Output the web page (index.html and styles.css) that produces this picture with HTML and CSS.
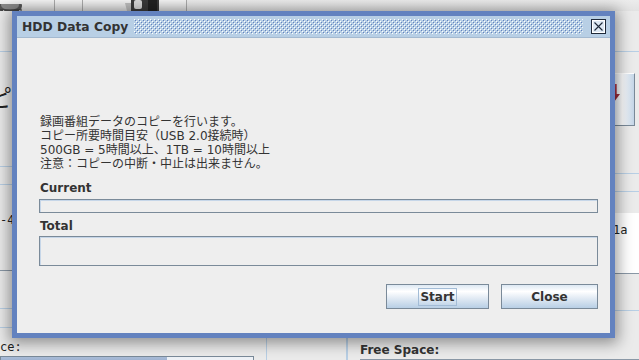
FILE: index.html
```html
<!DOCTYPE html>
<html lang="ja">
<head>
<meta charset="utf-8">
<title>HDD Data Copy</title>
<link rel="stylesheet" href="styles.css">
</head>
<body>
<div class="app">
  <div class="toolbar">
    <div class="tool tool-a">
      <svg width="24" height="11" viewBox="0 0 24 11"><ellipse cx="10" cy="2" rx="12" ry="8" fill="#555"/><ellipse cx="10" cy="1" rx="9" ry="5" fill="#888"/><path d="M0 6h22M0 8h22" stroke="#333" stroke-width="1"/><path d="M2 9l2-3M6 10l2-3M10 10l2-3M14 10l2-3M18 9l2-3" stroke="#ccc" stroke-width="1"/></svg>
    </div>
    <div class="tool tool-b"></div>
    <div class="tool tool-c">
      <svg width="40" height="11" viewBox="0 0 40 11"><path d="M6 0h28v11H6z" fill="#3a3a3a"/><rect x="9" y="0" width="8" height="9" rx="2" fill="#d8d8d8"/><rect x="23" y="0" width="9" height="11" fill="#222"/><path d="M0 3l6 0v8H2z" fill="#bdbdbd"/></svg>
    </div>
    <div class="tool tool-d"></div>
  </div>
  <div class="main">
    <div class="pane left">
      <div class="row r1"></div>
      <div class="row r2"><span class="big">ピ</span></div>
      <div class="row r3"></div>
      <div class="row r4"><span class="mono">-4</span></div>
      <div class="row r5"></div>
      <div class="row r6"></div>
      <div class="row r7">
        <span class="lbl">ce:</span>
        <div class="meter"><div class="meter-fill" style="width:66%"></div></div>
      </div>
    </div>
    <div class="pane mid"></div>
    <div class="pane right">
      <div class="row r1"></div>
      <div class="row q2"><div class="side-btn"><span class="arrow"></span></div></div>
      <div class="row q3"></div>
      <div class="row q4"><div class="textarea"><span class="mono">1a</span></div></div>
      <div class="row q5"></div>
      <div class="row q6"><span class="lbl bold">Free Space:</span><div class="underline"></div></div>
    </div>
  </div>
</div>

<div class="dialog" role="dialog" aria-label="HDD Data Copy">
  <div class="titlebar">
    <span class="title">HDD Data Copy</span>
    <svg class="bumps" height="15" aria-hidden="true">
      <defs>
        <pattern id="bp" width="4" height="4" patternUnits="userSpaceOnUse">
          <rect x="0" y="0" width="1" height="1" fill="#ffffff"/>
          <rect x="2" y="2" width="1" height="1" fill="#ffffff"/>
          <rect x="1" y="1" width="1" height="1" fill="#6382bf"/>
          <rect x="3" y="3" width="1" height="1" fill="#6382bf"/>
        </pattern>
      </defs>
      <rect width="100%" height="100%" fill="url(#bp)"/>
    </svg>
    <svg class="close" width="15" height="15" viewBox="0 0 15 15" aria-label="close">
      <rect x="0.5" y="0.5" width="14" height="14" fill="#dde8f3" stroke="#1f2a3a"/>
      <rect x="1.5" y="1.5" width="12" height="12" fill="none" stroke="#ffffff"/>
      <path d="M3.5 3.5L11.5 11.5M11.5 3.5L3.5 11.5" stroke="#1f2a3a" stroke-width="1.1"/>
    </svg>
  </div>
  <div class="body">
    <div class="msg">
      <div>録画番組データのコピーを行います。</div>
      <div>コピー所要時間目安（USB 2.0接続時）</div>
      <div>500GB = 5時間以上、1TB = 10時間以上</div>
      <div>注意：コピーの中断・中止は出来ません。</div>
    </div>
    <div class="label first">Current</div>
    <div class="bar"></div>
    <div class="label">Total</div>
    <div class="bar tall"></div>
    <div class="buttons">
      <button class="btn start"><span class="focus">Start</span></button>
      <button class="btn close-btn"><span>Close</span></button>
    </div>
  </div>
</div>
</body>
</html>
```
FILE: styles.css
```css
html, body {
  margin: 0;
  padding: 0;
}
body {
  width: 639px;
  height: 360px;
  overflow: hidden;
  background: #eeeeee;
  font-family: "DejaVu Sans", "Noto Sans CJK JP", sans-serif;
  color: #333333;
  position: relative;
}

/* ---------- background application ---------- */
.app {
  display: flex;
  flex-direction: column;
  height: 360px;
}
.toolbar {
  height: 11px;
  display: flex;
  background: linear-gradient(#f4f4f4, #dedede);
  flex: none;
}
.tool {
  height: 11px;
  border-right: 1px solid #a9a9a9;
  overflow: hidden;
}
.tool-a { width: 54px; }
.tool-b { width: 27px; }
.tool-c { width: 103px; display: flex; justify-content: center; }
.tool-c svg { margin-left: 20px; }
.tool-d { flex: 1; border-right: none; background: linear-gradient(#ececec, #e2e2e2); }

.main {
  flex: 1;
  display: flex;
  min-height: 0;
}
.pane {
  display: flex;
  flex-direction: column;
  background: #ebebeb;
}
.left {
  width: 266px;
  border-right: 1px solid #b8cfe5;
}
.mid {
  width: 79px;
  border-right: 1px solid #b8cfe5;
}
.right {
  flex: 1;
}
.row {
  flex: none;
  box-sizing: border-box;
  border-bottom: 1px solid #b8cfe5;
  position: relative;
  overflow: hidden;
}
.left .r1 { height: 41px; }
.left .r2 { height: 115px; }
.left .r3 { height: 18px; }
.left .r4 { height: 86px; border-bottom-color: #8a98a6; }
.left .r5 { height: 38px; }
.left .r6 { height: 19px; }
.left .r7 { flex: 1; border-bottom: none; padding-top: 12px; }

.big {
  display: block;
  margin-top: 33px;
  margin-left: -12px;
  font-size: 24px;
  line-height: 24px;
  font-family: "Noto Sans CJK JP", sans-serif;
  color: #222;
}
.mono {
  font-family: "DejaVu Sans Mono", "Liberation Mono", monospace;
  font-size: 12px;
  color: #222;
}
.left .r4 .mono {
  display: block;
  margin-top: 28px;
}
.lbl {
  display: block;
  font-size: 12px;
  line-height: 14px;
  color: #222;
  font-family: "DejaVu Sans Mono", monospace;
}
.lbl.bold {
  font-family: "DejaVu Sans", sans-serif;
  font-weight: bold;
  color: #333;
}
.meter {
  margin-top: 2px;
  width: 252px;
  height: 10px;
  border: 1px solid #7a8a99;
  background: #eef2f7;
}
.meter-fill {
  height: 100%;
  background: linear-gradient(#a9bcd8, #8ea5c8);
}

.right .r1 { height: 41px; }
.right .q2 { height: 122px; display: flex; justify-content: flex-end; align-items: flex-start; }
.right .q3 { height: 18px; }
.right .q4 { height: 82px; border-bottom-color: #8a98a6; display: flex; flex-direction: column; justify-content: flex-end; }
.right .q5 { height: 37px; }
.right .q6 { flex: 1; border-bottom: none; border-left: 1px solid #b8cfe5; padding: 32px 0 0 12px; }
.right .q6 .lbl { line-height: 15px; }
.underline { border-top: 1px solid #8a98a6; margin-top: 1px; }

.side-btn {
  margin-top: 21px;
  margin-right: 4px;
  width: 22px;
  height: 53px;
  box-sizing: border-box;
  border: 1px solid #7a8a99;
  border-top-color: #ffffff;
  background: linear-gradient(90deg, #e6edf5, #ffffff 40%, #c4d6e8);
  position: relative;
}
.arrow {
  position: absolute;
  left: 0;
  top: 10px;
  width: 6px;
  height: 18px;
  background: linear-gradient(#b53a4c, #8e2232);
  clip-path: polygon(0 0, 45% 0, 45% 55%, 100% 55%, 0 100%);
}
.textarea {
  height: 60px;
  background: linear-gradient(90deg, #f7f7f7, #ffffff 30%);
  padding: 6px 0 0 266px;
  box-sizing: border-box;
}

/* ---------- dialog ---------- */
.dialog {
  position: absolute;
  left: 12px;
  top: 11px;
  width: 603px;
  height: 327px;
  box-sizing: border-box;
  border: 5px solid #6382bf;
  background: #eeeeee;
  box-shadow: 0 2px 14px 3px rgba(0, 0, 0, 0.4);
  display: flex;
  flex-direction: column;
}
.titlebar {
  flex: none;
  height: 21px;
  border-bottom: 1px solid #a3b9d0;
  background: #b8cfe5;
  display: flex;
  align-items: center;
  padding: 0 4px 0 5px;
}
.title {
  font-weight: bold;
  font-size: 12.3px;
  line-height: 14px;
  color: #333333;
  white-space: nowrap;
}
.bumps {
  flex: 1;
  margin: 0 8px 0 6px;
  min-width: 0;
}
.close {
  flex: none;
  display: block;
}

.body {
  flex: 1;
  padding: 77px 12px 0 22px;
  display: flex;
  flex-direction: column;
}
.msg {
  font-size: 12px;
  line-height: 14px;
  padding-left: 1px;
  color: #333333;
}
.label {
  font-weight: bold;
  font-size: 12px;
  line-height: 14px;
  padding-left: 1px;
  margin-top: 6px;
}
.label.first { margin-top: 10px; }
.bar {
  margin-top: 4px;
  height: 14px;
  box-sizing: border-box;
  border: 1px solid #7a8a99;
  box-shadow: inset 1px 1px 0 #c6d6e8;
  background: #eeeeee;
}
.bar.tall {
  margin-top: 3px;
  height: 30px;
}
.buttons {
  margin-top: 18px;
  display: flex;
  justify-content: flex-end;
  gap: 12px;
}
.btn {
  height: 25px;
  box-sizing: border-box;
  border: 1px solid #7a8a99;
  background: linear-gradient(#dde8f3 0%, #ffffff 28%, #e4ecf5 55%, #b8cfe5 100%);
  font-family: "DejaVu Sans", sans-serif;
  font-weight: bold;
  font-size: 12px;
  color: #333333;
  padding: 0;
  margin: 0;
  display: flex;
  align-items: center;
  justify-content: center;
}
.btn.start { width: 103px; }
.btn.close-btn { width: 97px; }
.focus {
  border: 1px solid #a3bcd6;
  padding: 1px 1px;
  line-height: 14px;
}
```
